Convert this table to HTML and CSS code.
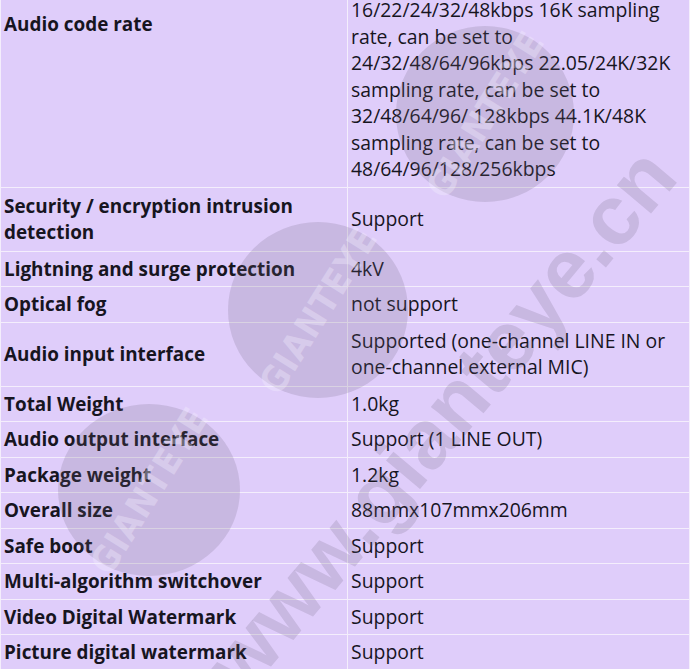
FILE: index.html
```html
<!DOCTYPE html>
<html lang="en">
<head>
<meta charset="utf-8">
<title>Specifications</title>
<link rel="stylesheet" href="styles.css">
</head>
<body>
<div class="sheet">
  <table class="spec">
    <tbody>
      <tr>
        <th class="label label-top">Audio code rate</th>
        <td class="value">16/22/24/32/48kbps 16K sampling<br>rate, can be set to<br>24/32/48/64/96kbps 22.05/24K/32K<br>sampling rate, can be set to<br>32/48/64/96/ 128kbps 44.1K/48K<br>sampling rate, can be set to<br>48/64/96/128/256kbps</td>
      </tr>
      <tr>
        <th class="label two-line">Security / encryption intrusion<br>detection</th>
        <td class="value">Support</td>
      </tr>
      <tr>
        <th class="label">Lightning and surge protection</th>
        <td class="value">4kV</td>
      </tr>
      <tr>
        <th class="label">Optical fog</th>
        <td class="value">not support</td>
      </tr>
      <tr>
        <th class="label">Audio input interface</th>
        <td class="value two-line">Supported (one-channel LINE IN or<br>one-channel external MIC)</td>
      </tr>
      <tr>
        <th class="label">Total Weight</th>
        <td class="value">1.0kg</td>
      </tr>
      <tr>
        <th class="label">Audio output interface</th>
        <td class="value">Support (1 LINE OUT)</td>
      </tr>
      <tr>
        <th class="label">Package weight</th>
        <td class="value">1.2kg</td>
      </tr>
      <tr>
        <th class="label">Overall size</th>
        <td class="value">88mmx107mmx206mm</td>
      </tr>
      <tr>
        <th class="label">Safe boot</th>
        <td class="value">Support</td>
      </tr>
      <tr>
        <th class="label">Multi-algorithm switchover</th>
        <td class="value">Support</td>
      </tr>
      <tr>
        <th class="label">Video Digital Watermark</th>
        <td class="value">Support</td>
      </tr>
      <tr>
        <th class="label">Picture digital watermark</th>
        <td class="value">Support</td>
      </tr>
    </tbody>
  </table>

  <div class="watermark" aria-hidden="true">
    <div class="disc disc-1"><span class="disc-text">GIANTEYE</span></div>
    <div class="disc disc-2"><span class="disc-text">GIANTEYE</span></div>
    <div class="disc disc-3"><span class="disc-text">GIANTEYE</span></div>
    <div class="site">www.gianteye.cn</div>
  </div>
</div>
</body>
</html>
```

FILE: styles.css
```css
html, body {
  margin: 0;
  padding: 0;
  overflow: hidden;
  background: #dfcdfa;
}

.sheet {
  position: relative;
  width: 690px;
  height: 669px;
  overflow: hidden;
}

.spec {
  width: 690px;
  margin-top: -8px;
  border-collapse: collapse;
  table-layout: fixed;
  background: #dfcdfa;
  font-family: "Open Sans", "Noto Sans", sans-serif;
  line-height: 26.5px;
  color: #17151f;
}

.spec th,
.spec td {
  border: 1px solid #f4eefc;
  padding: 4px 4px 4px 3px;
  vertical-align: middle;
  text-align: left;
}

.spec .two-line {
  padding-top: 5px;
  padding-bottom: 5px;
}

.spec .label {
  width: 339px;
  font-weight: 700;
  font-size: 18.9px;
}

.spec .label-top {
  vertical-align: top;
  padding-top: 18px;
}

.spec .value {
  font-weight: 400;
  font-size: 19.4px;
  white-space: nowrap;
}

/* watermark overlay */
.watermark {
  position: absolute;
  inset: 0;
  pointer-events: none;
}

.disc {
  position: absolute;
  border-radius: 50%;
  background: rgba(110, 100, 125, 0.2);
  display: flex;
  align-items: center;
  justify-content: center;
}

.disc-1 {
  left: 396px;
  top: 26px;
  width: 178px;
  height: 176px;
}

.disc-2 {
  left: 228px;
  top: 222px;
  width: 180px;
  height: 176px;
}

.disc-3 {
  left: 58px;
  top: 404px;
  width: 182px;
  height: 172px;
}

.disc-text {
  transform: rotate(-58deg);
  font-family: "DejaVu Sans Condensed", "Liberation Sans Narrow", sans-serif;
  font-weight: 700;
  font-size: 36px;
  letter-spacing: 1px;
  color: rgba(245, 240, 255, 0.35);
}

.site {
  position: absolute;
  left: 100px;
  top: 376px;
  width: 680px;
  text-align: center;
  transform: rotate(-50deg);
  font-family: "Liberation Sans", sans-serif;
  font-weight: 700;
  font-size: 84px;
  line-height: 88px;
  color: rgba(110, 100, 125, 0.2);
  white-space: nowrap;
}
```
